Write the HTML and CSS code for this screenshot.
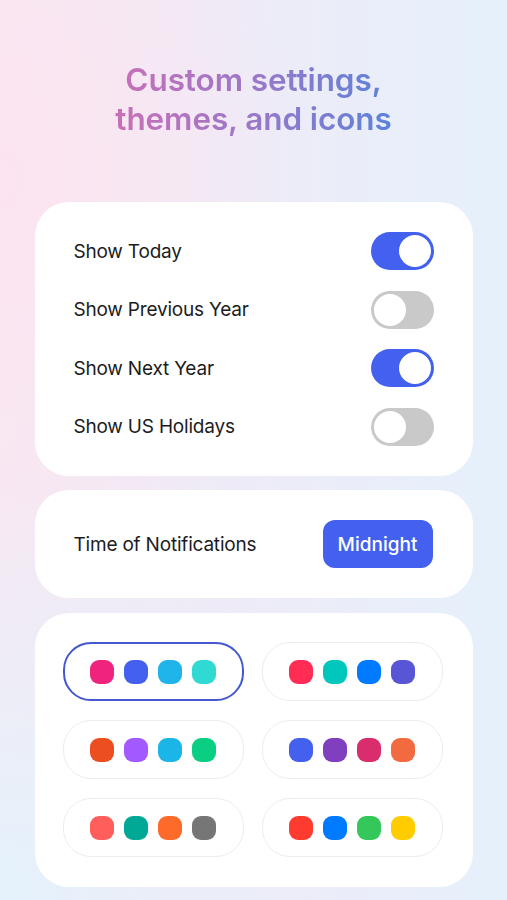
FILE: index.html
```html
<!DOCTYPE html>
<html>
<head>
<meta charset="utf-8">
<link rel="stylesheet" href="styles.css">
</head>
<body>
<main class="page">
  <h1 class="title">Custom settings,<br>themes, and icons</h1>

  <section class="card toggles">
    <div class="row"><span class="label">Show Today</span><span class="switch on"><span class="knob"></span></span></div>
    <div class="row"><span class="label">Show Previous Year</span><span class="switch off"><span class="knob"></span></span></div>
    <div class="row"><span class="label">Show Next Year</span><span class="switch on"><span class="knob"></span></span></div>
    <div class="row"><span class="label">Show US Holidays</span><span class="switch off"><span class="knob"></span></span></div>
  </section>

  <section class="card notif">
    <span class="label">Time of Notifications</span>
    <span class="btn">Midnight</span>
  </section>

  <section class="card themes">
    <div class="theme selected">
      <span class="dot" style="background:#f0237f"></span>
      <span class="dot" style="background:#4361ee"></span>
      <span class="dot" style="background:#1fb5ea"></span>
      <span class="dot" style="background:#30d9d4"></span>
    </div>
    <div class="theme">
      <span class="dot" style="background:#ff2d55"></span>
      <span class="dot" style="background:#00c7be"></span>
      <span class="dot" style="background:#007aff"></span>
      <span class="dot" style="background:#5856d6"></span>
    </div>
    <div class="theme">
      <span class="dot" style="background:#ec4e20"></span>
      <span class="dot" style="background:#a259ff"></span>
      <span class="dot" style="background:#1cb5e8"></span>
      <span class="dot" style="background:#0acf83"></span>
    </div>
    <div class="theme">
      <span class="dot" style="background:#4361ee"></span>
      <span class="dot" style="background:#7f3fbf"></span>
      <span class="dot" style="background:#d92d6e"></span>
      <span class="dot" style="background:#f26a3f"></span>
    </div>
    <div class="theme">
      <span class="dot" style="background:#ff5e5b"></span>
      <span class="dot" style="background:#00a896"></span>
      <span class="dot" style="background:#fd6a2a"></span>
      <span class="dot" style="background:#767676"></span>
    </div>
    <div class="theme">
      <span class="dot" style="background:#ff3b30"></span>
      <span class="dot" style="background:#007aff"></span>
      <span class="dot" style="background:#34c759"></span>
      <span class="dot" style="background:#ffcc00"></span>
    </div>
  </section>
</main>
</body>
</html>
```
FILE: styles.css
```css
* { box-sizing: border-box; }
html, body {
  margin: 0;
  padding: 0;
  width: 507px;
  height: 900px;
  overflow: hidden;
}
body {
  font-family: Inter, "Noto Sans", "Liberation Sans", sans-serif;
  color: #1c1c1e;
  background:
    radial-gradient(ellipse 320px 420px at 0% 100%, rgba(226, 243, 252, 0.9), rgba(226, 243, 252, 0) 100%),
    radial-gradient(ellipse 300px 400px at 0% 20%, rgba(252, 228, 240, 0.95), rgba(252, 228, 240, 0) 100%),
    linear-gradient(90deg, #f7e8f3 0%, #eeebf7 45%, #e5f0fb 100%);
}
.page {
  display: flex;
  flex-direction: column;
  align-items: center;
  padding-top: 60px;
}
.title {
  margin: 0 0 64px;
  font-size: 31.5px;
  line-height: 39px;
  font-weight: 600;
  text-align: center;
  letter-spacing: -0.1px;
  background: linear-gradient(90deg, #c86fb6 0%, #9a78c8 50%, #5c82da 100%);
  -webkit-background-clip: text;
  background-clip: text;
  color: transparent;
}
.card {
  width: 438px;
  background: #fff;
  border-radius: 34px;
}
.toggles {
  padding: 20px 39px 20px 39px;
  display: flex;
  flex-direction: column;
}
.row {
  height: 58.5px;
  display: flex;
  align-items: center;
  justify-content: space-between;
}
.label {
  font-size: 19px;
  font-weight: 400;
  letter-spacing: -0.2px;
}
.switch {
  width: 63px;
  height: 38px;
  border-radius: 19px;
  display: flex;
  align-items: center;
  padding: 1px;
}
.switch.on {
  background: #4361ee;
  justify-content: flex-end;
}
.switch.off {
  background: #c9c9c9;
  justify-content: flex-start;
}
.knob {
  width: 36px;
  height: 36px;
  border-radius: 50%;
  background: #fff;
}
.switch.on .knob { border: 2px solid #4361ee; }
.switch.off .knob { border: 2px solid #c9c9c9; }

.notif {
  margin-top: 14px;
  height: 108px;
  padding: 0 40px 0 39px;
  display: flex;
  align-items: center;
  justify-content: space-between;
}
.btn {
  width: 110px;
  height: 48px;
  border-radius: 12px;
  background: #4361ee;
  color: #fff;
  font-size: 19px;
  font-weight: 500;
  display: flex;
  align-items: center;
  justify-content: center;
}
.themes {
  margin-top: 15px;
  padding: 29px 30px 30px 28px;
  display: grid;
  grid-template-columns: 1fr 1fr;
  column-gap: 18px;
  row-gap: 19px;
}
.theme {
  height: 59px;
  border: 1.5px solid #ececec;
  border-radius: 28px;
  display: flex;
  align-items: center;
  justify-content: center;
  gap: 10.3px;
}
.theme.selected {
  border: 2.5px solid #4458cf;
}
.dot {
  width: 24px;
  height: 24px;
  border-radius: 9px;
}
```
